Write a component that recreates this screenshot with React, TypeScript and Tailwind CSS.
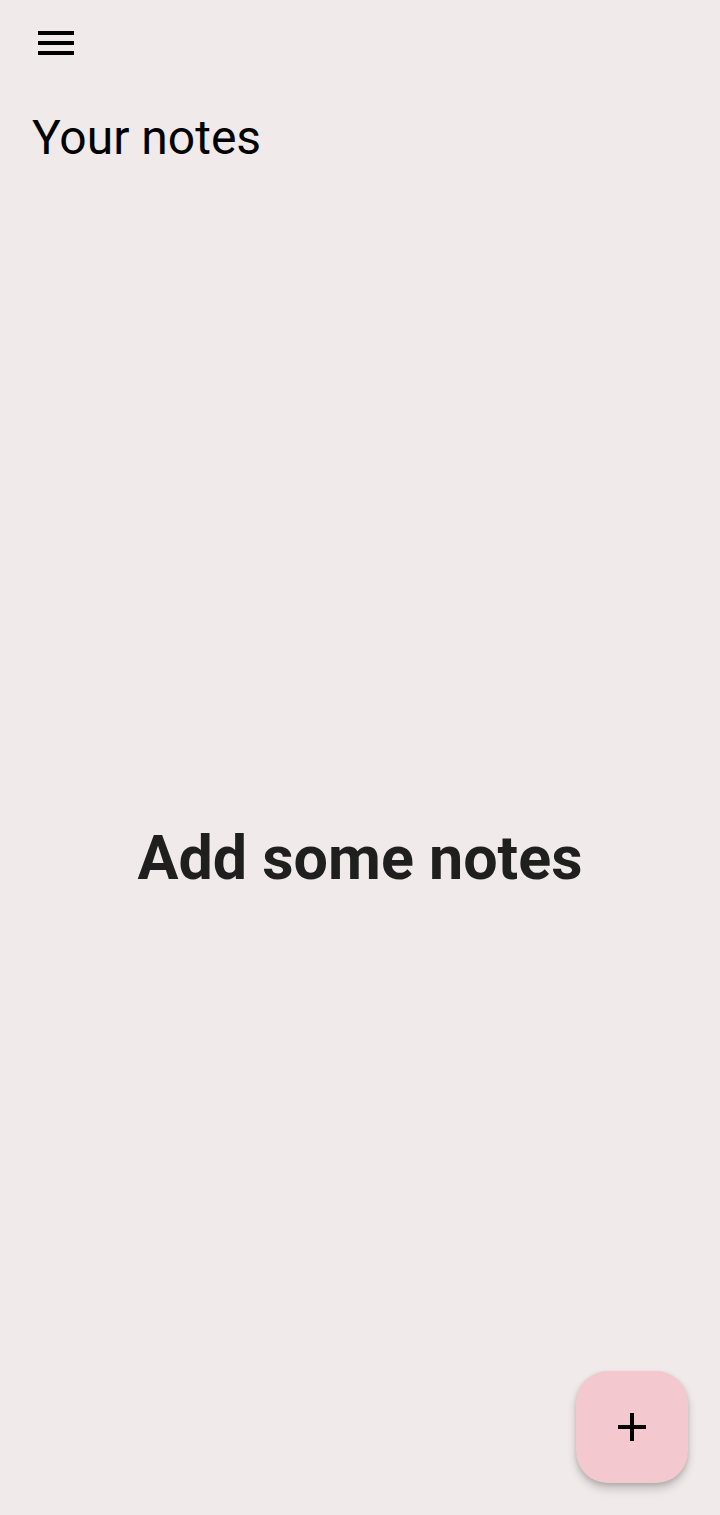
const MenuIcon = () => (
  <svg viewBox="0 0 24 24" className="h-12 w-12" fill="currentColor">
    <path d="M3 18h18v-2H3v2zm0-5h18v-2H3v2zm0-7v2h18V6H3z" />
  </svg>
)

const AddIcon = () => (
  <svg viewBox="0 0 24 24" className="h-12 w-12" fill="currentColor">
    <path d="M19 13h-6v6h-2v-6H5v-2h6V5h2v6h6v2z" />
  </svg>
)

export default function App() {
  return (
    <div
      className="relative flex h-[1515px] w-full flex-col bg-[#f0eaea] text-black"
      style={{ fontFamily: 'Roboto, "Noto Sans", sans-serif' }}
    >
      {/* top bar */}
      <div className="flex h-[108px] items-start px-8 pt-[19px]">
        <button aria-label="Open menu" className="text-black">
          <MenuIcon />
        </button>
      </div>

      <h1 className="mb-[34px] px-8 text-[48px] leading-[60px] font-normal">Your notes</h1>

      {/* empty state */}
      <div className="flex flex-1 items-center justify-center">
        <p className="text-[61px] font-bold text-[#1f1f1f]">Add some notes</p>
      </div>

      {/* FAB */}
      <button
        aria-label="Add note"
        className="absolute right-8 bottom-8 flex h-[112px] w-[112px] items-center justify-center rounded-[32px] bg-[#f3c9cf] text-black shadow-[0_6px_10px_rgba(0,0,0,0.18),0_2px_4px_rgba(0,0,0,0.12)]"
      >
        <AddIcon />
      </button>
    </div>
  )
}
